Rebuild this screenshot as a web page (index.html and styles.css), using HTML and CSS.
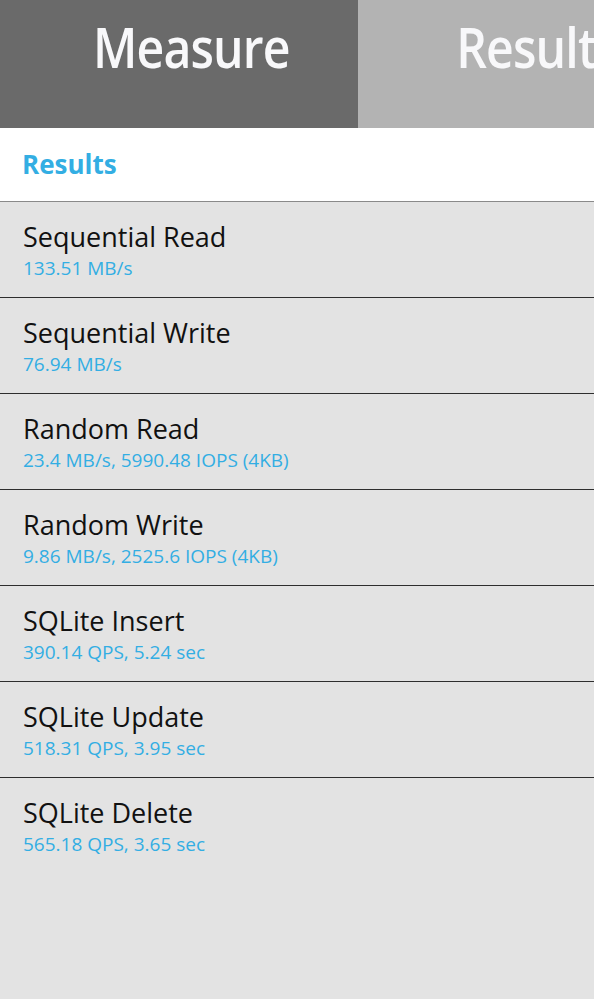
FILE: index.html
```html
<!DOCTYPE html>
<html>
<head>
<meta charset="utf-8">
<link rel="stylesheet" href="styles.css">
</head>
<body>
<div class="tabs">
  <div class="tab tab-active"><span class="tab-label">Measure</span></div>
  <div class="tab tab-idle"><span class="tab-label">Results</span></div>
</div>
<div class="header">Results</div>
<ul class="list">
  <li class="item"><div class="title">Sequential Read</div><div class="sub">133.51 MB/s</div></li>
  <li class="item"><div class="title">Sequential Write</div><div class="sub">76.94 MB/s</div></li>
  <li class="item"><div class="title">Random Read</div><div class="sub">23.4 MB/s, 5990.48 IOPS (4KB)</div></li>
  <li class="item"><div class="title">Random Write</div><div class="sub">9.86 MB/s, 2525.6 IOPS (4KB)</div></li>
  <li class="item"><div class="title">SQLite Insert</div><div class="sub">390.14 QPS, 5.24 sec</div></li>
  <li class="item"><div class="title">SQLite Update</div><div class="sub">518.31 QPS, 3.95 sec</div></li>
  <li class="item item-last"><div class="title">SQLite Delete</div><div class="sub">565.18 QPS, 3.65 sec</div></li>
</ul>
</body>
</html>
```
FILE: styles.css
```css
html, body {
  margin: 0;
  padding: 0;
}
body {
  width: 594px;
  height: 999px;
  overflow: hidden;
  background: #e3e3e3;
  font-family: "Open Sans", "Noto Sans", sans-serif;
}
.tabs {
  display: flex;
  height: 128px;
  overflow: hidden;
}
.tab {
  flex: 0 0 358px;
  display: flex;
  justify-content: center;
  padding-top: 14px;
  box-sizing: border-box;
}
.tab-active {
  background: #6a6a6a;
  padding-left: 24px;
}
.tab-idle { background: #b3b3b3; }
.tab-label {
  color: #f8f8fa;
  font-size: 56px;
  font-weight: 600;
  line-height: 64px;
  display: inline-block;
  transform: scaleX(0.86);
  letter-spacing: -1px;
}
.header {
  background: #fff;
  height: 74px;
  box-sizing: border-box;
  padding: 18px 0 0 22px;
  color: #33aee3;
  font-size: 26px;
  font-weight: 700;
  line-height: 36px;
  border-bottom: 1px solid #8a8a8a;
}
.list {
  list-style: none;
  margin: 0;
  padding: 0;
}
.item {
  height: 96px;
  box-sizing: border-box;
  padding: 17px 0 0 23px;
  border-bottom: 1px solid #2e2e2e;
}
.item-last { border-bottom: none; }
.title {
  color: #111;
  font-size: 27px;
  line-height: 36px;
}
.sub {
  color: #33aee3;
  font-size: 19px;
  line-height: 24px;
  margin-top: 1px;
}
```
